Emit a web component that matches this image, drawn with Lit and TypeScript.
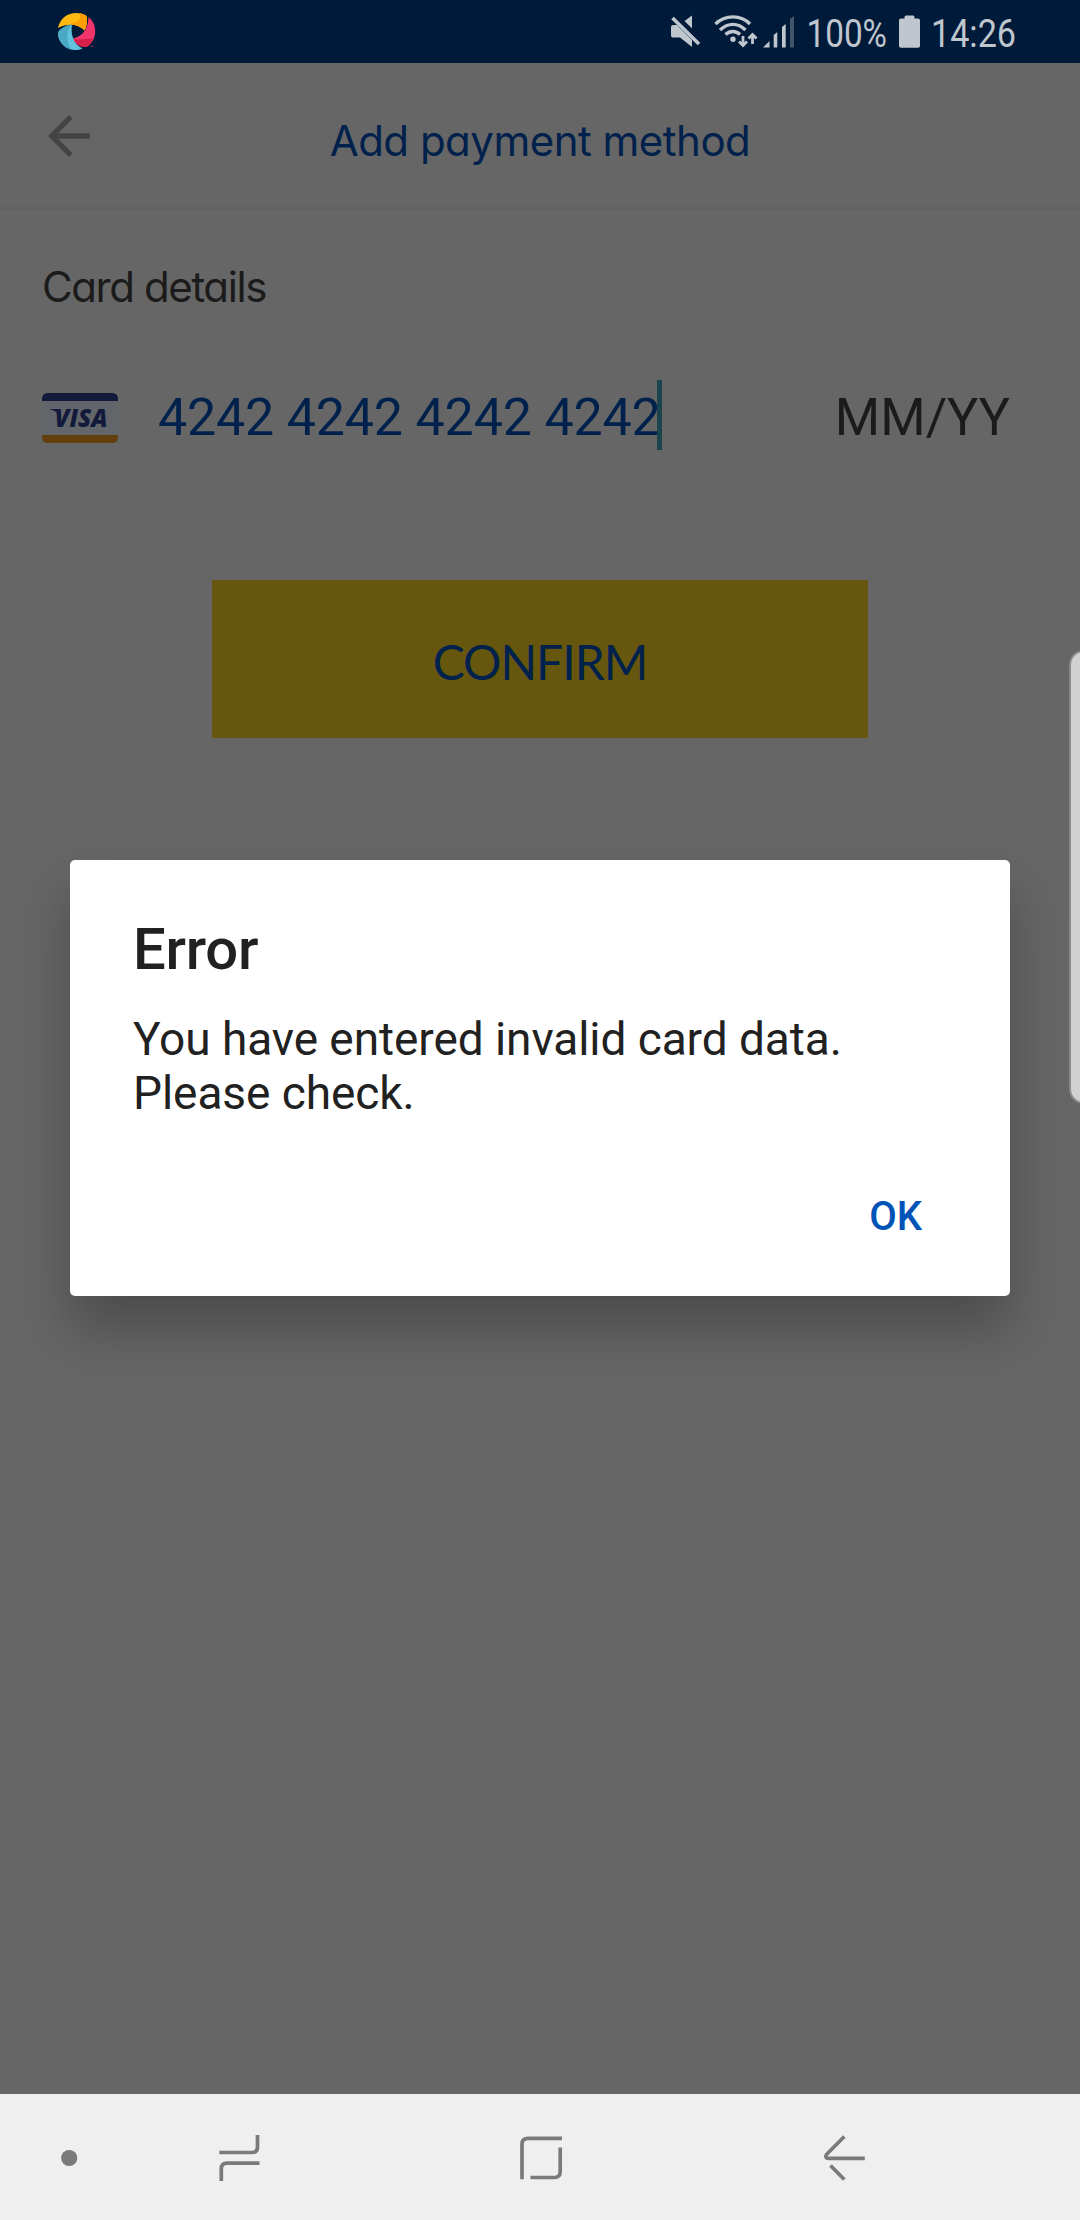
import { LitElement, html, css, svg } from "lit";
import { customElement, property } from "lit/decorators.js";

@customElement("status-bar")
class StatusBar extends LitElement {
  static styles = css`
    :host { display: flex; height: 63px; background: #001a3a; align-items: flex-start; justify-content: space-between; }
    svg { display: block; }
    .fill { fill: #bfc6ce; }
    .line { fill: none; stroke: #bfc6ce; }
    .txt { fill: #bfc6ce; font-family: "Roboto", sans-serif; font-size: 39.5px; }
    .logo { margin-left: 50px; }
  `;
  render() {
    return html`
      <svg class="logo" width="60" height="63" viewBox="50 0 60 63">
        <path d="M58 28 C60 18 68 13 76 13 C80 13 84 14 86.500 16 C87.500 21 87 26 84.500 30.500 C78 24 68 23 58 28Z" fill="#ffb911" />
        <path d="M79 13.200 C82 13.500 85 14.500 86.500 16 C87.500 21 87 26 84.500 30.500 C83 28 79 25.500 70 24 C79 22 82 19 79 13.200Z" fill="#ff9d05" />
        <path d="M88.500 17 C93 20.500 95.300 26 95.200 32 C95 38 92 44 86.500 47 C80 47 75 43.500 72.500 38.500 C81 37 88 31 88.500 17Z" fill="#f2356d" />
        <path d="M72.500 38.500 C79 40.500 87 38 93 39 C91.500 42.500 89.500 45 86.500 47 C80 47 75 43.500 72.500 38.500Z" fill="#d81f49" />
        <path d="M58 32.500 C61 28 66 25.500 72 24.800 C70.500 34 73 44 82.500 48.500 C76 51.500 68 50 63.500 45.500 C60 42 57.800 37 58 32.500Z" fill="#62c1dc" />
        <path d="M58 32.500 C61 28 66 25.500 72 24.800 C66 31 66 40 70.500 49.200 C62 46.500 57.500 39 58 32.500Z" fill="#49a9c4" />
        <path d="M90 46 L93 45.800 L92.500 47Z" fill="#f2356d" />
      </svg>
      <svg width="420" height="63" viewBox="660 0 420 63">
        <path class="fill" d="M684.500 21 L692 15.500 V28.500Z" />
        <path class="fill" d="M673 25 H677 L692 40 V47 L680 37.500 H673 Q671 37.500 671 35.500 V27 Q671 25 673 25Z" />
        <path class="line" d="M672.500 18 L699 44" stroke-width="3.600" />
        <path class="line" d="M715.500 24 C725 14.500 741 14.500 750 24" stroke-width="3.400" />
        <path class="line" d="M720 30 C728 22.500 738 22.500 745.500 30" stroke-width="3.400" />
        <path class="line" d="M725.500 34.500 C730 30.500 736 30.500 740 34.500" stroke-width="3.400" />
        <circle class="fill" cx="733" cy="39.300" r="2.700" />
        <path class="line" d="M743 36 V45 M739 41.500 L743 45.500 L747 41.500 M752.500 44 V35 M748.500 38.500 L752.500 34.500 L756.500 38.500" stroke-width="2.800" />
        <path class="fill" d="M763 47.500 L769.500 41 V47.500Z M773.700 35 L777.300 32 V47.500 H773.700Z M782 27 L785.700 24 V47.500 H782Z" />
        <path class="fill" d="M790 19 L794 16 V47.500 H790Z" opacity=".35" />
        <text class="txt" x="806.500" y="47" textLength="80.500" lengthAdjust="spacingAndGlyphs">100%</text>
        <path class="fill" d="M904.500 18.500 V17 Q904.500 15.500 906 15.500 H913 Q914.500 15.500 914.500 17 V18.500 H918 Q920 18.500 920 20.500 V46 Q920 47.700 918 47.700 H901 Q899 47.700 899 46 V20.500 Q899 18.500 901 18.500Z" />
        <text class="txt" x="931" y="47" textLength="85" lengthAdjust="spacingAndGlyphs">14:26</text>
      </svg>
    `;
  }
}

@customElement("visa-badge")
class VisaBadge extends LitElement {
  static styles = css`
    :host { display: block; }
    svg { display: block; }
    text { font: italic 800 25.500px "Open Sans", sans-serif; fill: #12193a; }
  `;
  render() {
    return html`
      <svg width="76" height="50" viewBox="0 0 76 50">
        <rect width="76" height="50" rx="6" fill="#62656a" />
        <path d="M0 8 V6 Q0 0 6 0 H70 Q76 0 76 6 V8Z" fill="#131b3c" />
        <path d="M0 42 V44 Q0 50 6 50 H70 Q76 50 76 44 V42Z" fill="#63400b" />
        <path d="M8 16 H16 L19 23 Q14 17.500 8 16.500Z" fill="#12193a" />
        <text x="12.500" y="34" textLength="53" lengthAdjust="spacingAndGlyphs">VISA</text>
      </svg>
    `;
  }
}

@customElement("alert-dialog")
class AlertDialog extends LitElement {
  @property() heading = "";
  @property() message = "";
  static styles = css`
    :host {
      display: flex; flex-direction: column; box-sizing: border-box; width: 940px; height: 436px;
      padding: 55px 88px 0 63px; background: #fff; border-radius: 5px; font-family: "Roboto", sans-serif;
      color: #212121; box-shadow: 0 33px 54px rgba(0, 0, 0, 0.26);
    }
    .title { font-size: 58px; line-height: 68px; font-weight: 500; letter-spacing: -0.25px; }
    .body { margin-top: 29px; font-size: 46px; line-height: 54px; letter-spacing: -0.07px; white-space: pre-line; }
    .ok { margin-top: 73px; align-self: flex-end; font-size: 40px; line-height: 48px; font-weight: 500; color: #0054b8; }
  `;
  render() {
    return html`
      <div class="title">${this.heading}</div>
      <div class="body">${this.message}</div>
      <div class="ok">OK</div>
    `;
  }
}

@customElement("nav-bar")
class NavBar extends LitElement {
  static styles = css`
    :host { display: block; height: 126px; background: #efefef; }
    svg { display: block; }
    path { fill: none; stroke: #7a7a7a; stroke-width: 3.700px; }
    circle { fill: #7a7a7a; }
  `;
  render() {
    return html`
      <svg width="1080" height="126" viewBox="0 2094 1080 126">
        <circle cx="69.200" cy="2158" r="8.100" />
        ${[
          "M219.300 2152.500 H252 Q257.500 2152.500 257.500 2147 V2135",
          "M259.500 2163.200 H227 Q221.300 2163.200 221.300 2169 V2181",
          "M522 2179.300 V2144 Q522 2138.300 528 2138.300 H562",
          "M530.500 2177.500 H554.500 Q560.200 2177.500 560.200 2171.500 V2147.500",
          "M844.300 2136.500 L826.500 2154.500 Q824.500 2158.200 828.500 2158.300 H864.800",
          "M830.500 2165.500 L844.300 2179.500",
        ].map((d) => svg`<path d=${d} />`)}
      </svg>
    `;
  }
}

@customElement("app-root")
class AppRoot extends LitElement {
  static styles = css`
    :host { display: flex; flex-direction: column; position: relative; width: 1080px; height: 2220px; overflow: hidden; background: #666; }
    .header { display: grid; grid-template-columns: 90px 1fr 90px; height: 144px; border-bottom: 3px solid #626262; }
    .back { margin: 50px 0 0 46px; }
    .title { margin-top: 53px; text-align: center; font: 400 42px/50px "Inter", sans-serif; font-feature-settings: "cv11"; letter-spacing: -0.5px; color: #00214c; white-space: nowrap; }
    .form { flex: 1; display: flex; flex-direction: column; padding: 52px 42px 0; }
    .section { font: 400 42px/50px "Inter", sans-serif; font-feature-settings: "cv11"; letter-spacing: -1.4px; color: #1b1b1b; }
    .row { display: flex; align-items: center; height: 76px; margin-top: 68px; font: 400 52px/60px "Roboto", sans-serif; }
    .number { margin-left: 40px; letter-spacing: -0.2px; color: #00214c; white-space: nowrap; }
    .caret { width: 5px; height: 70px; margin: 0 0 6px -4px; background: #1c444d; }
    .expiry { margin-left: auto; margin-right: 28px; color: #1b1b1b; }
    .confirm { display: flex; align-items: center; justify-content: center; box-sizing: border-box; width: 656px; height: 158px; margin: 124px auto 0; padding-top: 5px; background: #66560e; color: #00214c; font: 400 48px/58px "Lato", sans-serif; letter-spacing: -1px; }
    .dialog { position: absolute; left: 70px; top: 860px; }
    .edge { position: absolute; left: 1069px; top: 650px; width: 30px; height: 454px; box-sizing: border-box; border: 2px solid #8b8b8b; border-radius: 15px; background: #d1d1d1; }
  `;
  render() {
    return html`
      <status-bar></status-bar>
      <div class="header">
        <svg class="back" width="46" height="46" viewBox="46 113 46 46">
          <path d="M90 133.200 V138.800 H58 L72.500 153.300 L69 157 L48 136 L69 115 L72.500 118.700 L58 133.200Z" fill="#444" />
        </svg>
        <div class="title">Add payment method</div>
      </div>
      <div class="form">
        <div class="section">Card details</div>
        <div class="row">
          <visa-badge></visa-badge>
          <span class="number">4242 4242 4242 4242</span>
          <span class="caret"></span>
          <span class="expiry">MM/YY</span>
        </div>
        <div class="confirm">CONFIRM</div>
      </div>
      <nav-bar></nav-bar>
      <alert-dialog class="dialog" heading="Error" message=${"You have entered invalid card data.\nPlease check."}></alert-dialog>
      <div class="edge"></div>
    `;
  }
}
